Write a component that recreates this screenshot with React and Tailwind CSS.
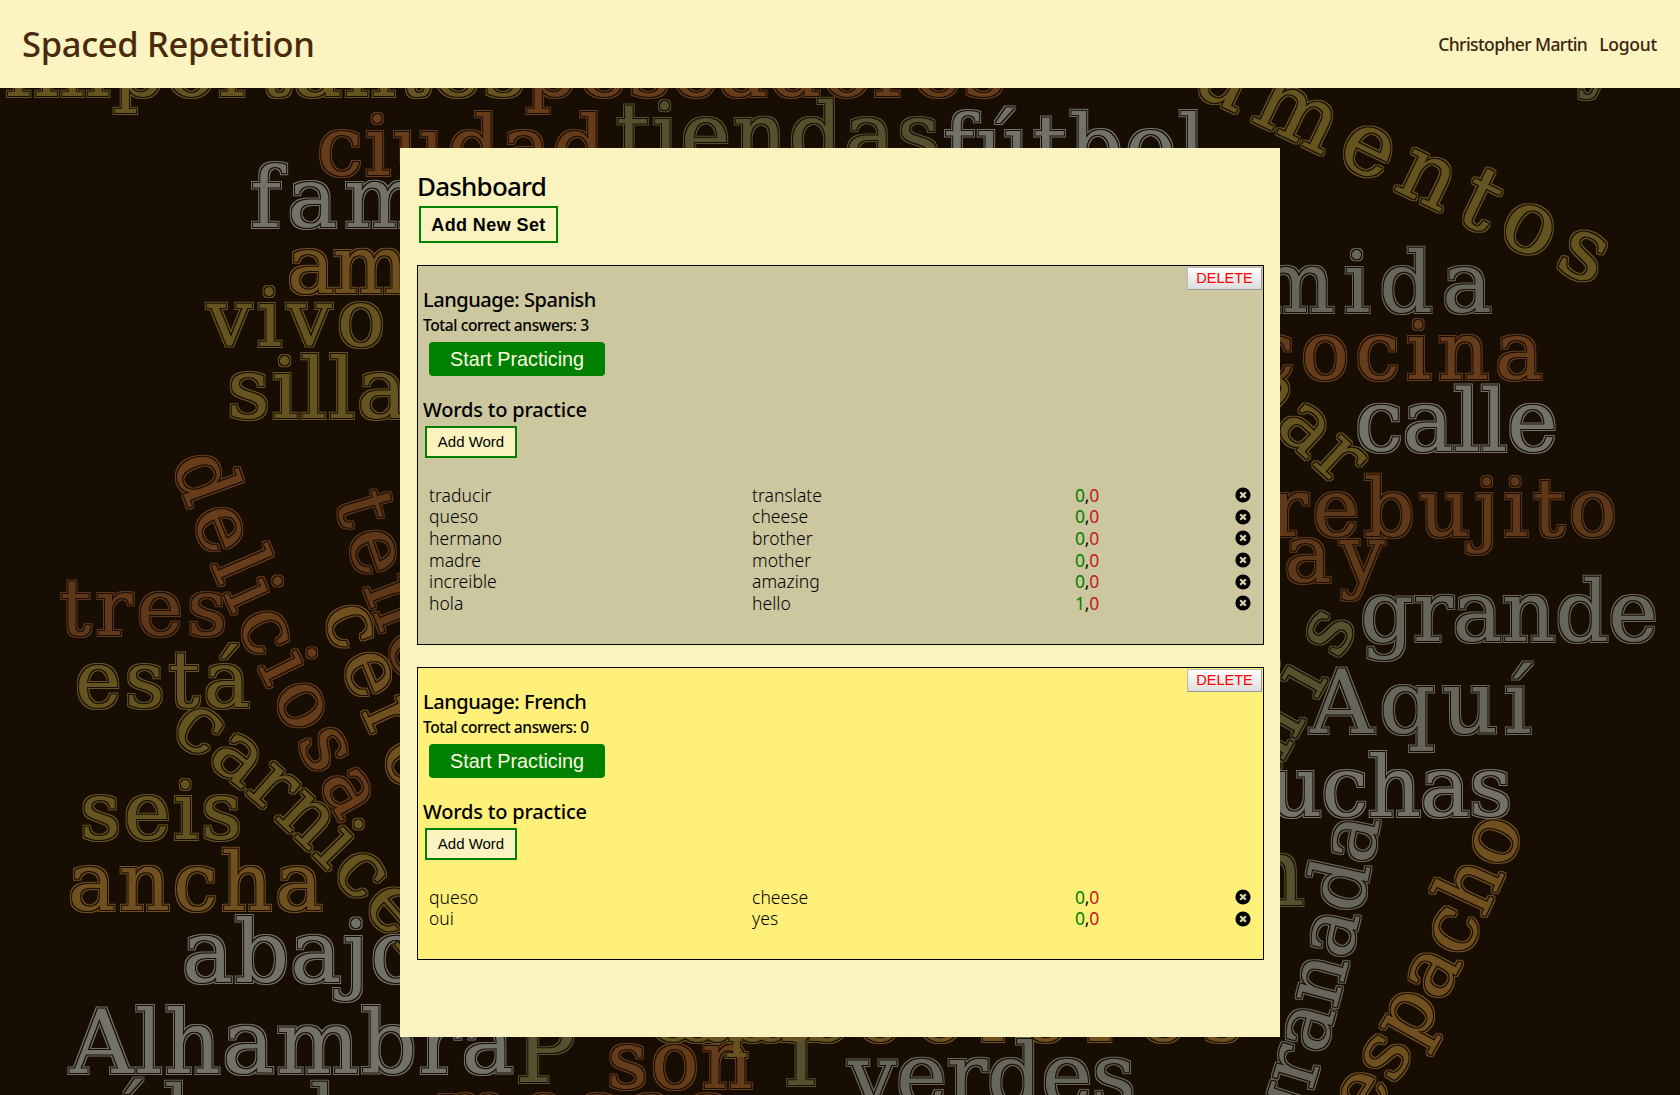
const GRAY = "#72726a";
const GRAY2 = "#66665a";
const BROWN = "#663c1a";
const BROWN2 = "#5f3819";
const OLIVE = "#655420";
const GOLD = "#71501f";
const KHAKI = "#55512f";

const straight = [
  ["importantes", 5, 96, 82, 520, OLIVE],
  ["pescadores", 525, 96, 82, 480, BROWN],
  ["ciudad", 317, 175, 82, 288, BROWN],
  ["tiendas", 616, 163, 84, 324, KHAKI],
  ["fútbol", 943, 175, 84, 262, GRAY],
  ["familia", 250, 227, 84, 330, GRAY],
  ["amigo", 287, 293, 80, 240, GOLD],
  ["vivo", 207, 346, 80, 178, OLIVE],
  ["silla", 227, 418, 84, 180, OLIVE],
  ["tres", 60, 635, 78, 167, BROWN2],
  ["está", 75, 707, 78, 175, OLIVE],
  ["seis", 80, 839, 80, 162, OLIVE],
  ["ancha", 68, 910, 80, 255, GOLD],
  ["abajo", 182, 982, 86, 240, GRAY],
  ["Alhambra", 70, 1073, 88, 444, GRAY],
  ["sábado", 55, 1146, 84, 340, GRAY2],
  ["mesas", 437, 1135, 76, 290, BROWN],
  ["P", 515, 1082, 90, 62, KHAKI],
  ["son", 607, 1088, 80, 146, BROWN],
  ["T", 771, 1085, 90, 54, KHAKI],
  ["verdes", 848, 1105, 86, 288, GRAY2],
  ["ocupado", 650, 1041, 76, 200, OLIVE],
  ["colores", 857, 1041, 76, 385, GOLD],
  ["hoy", 1480, 82, 76, 140, KHAKI],
  ["comida", 1140, 312, 84, 352, GRAY2],
  ["cocina", 1250, 379, 80, 293, BROWN],
  ["calle", 1355, 451, 86, 203, GRAY],
  ["rebujito", 1270, 536, 80, 347, BROWN2],
  ["hay", 1225, 582, 80, 160, BROWN2],
  ["grande", 1360, 641, 84, 298, GRAY2],
  ["Aquí", 1310, 733, 88, 222, GRAY2],
  ["muchas", 1190, 816, 84, 322, GRAY],
  ["tan", 1175, 905, 94, 130, KHAKI],
];

const curved = [
  ["a", "M 172 462 Q 225 620 345 830", "deliciosa", 80, 400, BROWN],
  ["b", "M 335 500 Q 360 590 410 700", "tener", 80, 240, BROWN2],
  ["c", "M 322 612 Q 360 720 420 830", "cerca", 80, 250, GOLD],
  ["d", "M 168 735 Q 285 810 420 975 L 540 1100", "carnicería", 80, 420, OLIVE],
  ["e", "M 1130 62 L 1595 287", "aumentos", 88, 515, OLIVE],
  ["f", "M 1215 375 L 1340 490", "mar", 80, 168, OLIVE],
  ["g", "M 1270 785 L 1358 625", "mis", 80, 183, KHAKI],
  ["h", "M 1296 1140 Q 1350 980 1380 820", "granada", 80, 332, GRAY2],
  ["i", "M 1340 1170 Q 1460 990 1527 820", "despacho", 80, 390, GOLD],
];

function WordCloud() {
  return (
    <svg className="absolute inset-0" width="1680" height="1095" aria-hidden="true">
      <defs>
        <filter id="outline" filterUnits="userSpaceOnUse" x="0" y="0" width="1680" height="1095" colorInterpolationFilters="sRGB">
          <feMorphology in="SourceGraphic" operator="dilate" radius="2" result="outer" />
          <feMorphology in="SourceAlpha" operator="dilate" radius="1" result="innerA" />
          <feFlood floodColor="#170d02" />
          <feComposite in2="innerA" operator="in" result="gap" />
          <feMerge result="m">
            <feMergeNode in="outer" />
            <feMergeNode in="gap" />
            <feMergeNode in="SourceGraphic" />
          </feMerge>
          <feGaussianBlur in="m" stdDeviation="0.45" />
        </filter>
        {curved.map((c) => (
          <path key={c[0]} id={`p-${c[0]}`} d={c[1]} />
        ))}
      </defs>
      <g filter="url(#outline)" fontFamily="'DejaVu Serif', serif">
        {straight.map(([t, x, y, s, l, c]) => (
          <text key={t} x={x} y={y} fontSize={s} textLength={l} fill={c}>{t}</text>
        ))}
        {curved.map(([id, , t, s, l, c]) => (
          <text key={id} fontSize={s} fill={c}>
            <textPath href={`#p-${id}`} textLength={l}>{t}</textPath>
          </text>
        ))}
      </g>
    </svg>
  );
}

function XIcon() {
  return (
    <svg width="16" height="16" viewBox="0 0 16 16">
      <circle cx="8" cy="8" r="7.6" fill="#000" />
      <path d="M5.2 5.2 L10.8 10.8 M10.8 5.2 L5.2 10.8" stroke="#d8d4b0" strokeWidth="2.2" />
    </svg>
  );
}

const ubuntu = "font-['Noto_Sans','Open_Sans',sans-serif]";
const arial = "font-['Liberation_Sans',Arial,sans-serif]";

function Row({ a, b, s }) {
  return (
    <div className="flex h-[21.7px] items-center">
      <div className="w-[323px] text-[17.5px] font-light tracking-[0.05px] text-black">{a}</div>
      <div className="w-[323px] text-[17.5px] font-light tracking-[0.05px] text-black">{b}</div>
      <div className="w-[160px] text-[17.5px] tracking-[-0.2px]">
        <span className="text-[#008000]">{s}</span>,<span className="text-[#c02020]">0</span>
      </div>
      <XIcon />
    </div>
  );
}

function WordSet({ bg, lang, total, rows, height }) {
  return (
    <section className={`relative border border-black px-[5px] pt-[18px] ${bg} ${height}`}>
      <button className={`absolute right-[1px] top-[0.5px] h-[23px] w-[75px] border border-[#bbb] border-b-[#999] border-r-[#999] bg-gradient-to-b from-white to-[#dcdcdc] text-center text-[14.5px] leading-[20px] text-[#ff0000] ${arial}`}>
        DELETE
      </button>
      <h2 className="h-[31px] text-[20px] font-medium leading-[32px] tracking-[-0.45px] text-black">Language: {lang}</h2>
      <p className="h-[20px] text-[15.5px] font-medium leading-[20px] tracking-[-0.4px] text-black">Total correct answers: {total}</p>
      <button className={`ml-[6px] mt-[7px] block h-[34px] w-[176px] rounded-[4px] bg-[#008000] text-center text-[19.8px] leading-[31px] text-[#fdfbe0] ${arial}`}>
        Start Practicing
      </button>
      <h2 className="mt-[18px] h-[31px] text-[20px] font-medium leading-[32px] tracking-[-0.2px] text-black">Words to practice</h2>
      <button className={`ml-[2px] mt-[1px] block h-[32px] w-[92px] border-2 border-[#008000] bg-[#faf3c0] text-center text-[15px] leading-[28px] text-black ${arial}`}>
        Add Word
      </button>
      <div className="mt-[26px] pl-[6px]">
        {rows.map((r) => (
          <Row key={r[0]} a={r[0]} b={r[1]} s={r[2]} />
        ))}
      </div>
    </section>
  );
}

export default function App() {
  return (
    <div className={`relative h-[1095px] w-[1680px] overflow-hidden bg-[#170d02] ${ubuntu}`}>
      <WordCloud />
      <header className="relative flex h-[88px] items-center justify-between bg-[#fbf4c0] pl-[22px] pr-[23px]">
        <h1 className="text-[34.5px] font-medium tracking-[-0.3px] text-[#4a2a0c]">Spaced Repetition</h1>
        <nav className="flex gap-[12px] text-[17.5px] font-medium text-[#3a2510]">
          <span className="tracking-[-0.6px]">Christopher Martin</span>
          <span className="tracking-[-0.25px]">Logout</span>
        </nav>
      </header>
      <main className="relative mx-auto mt-[60px] h-[889px] w-[880px] bg-[#faf3c0] pl-[17px] pr-[16px] pt-[19px]">
        <h1 className="h-[39px] text-[26px] font-medium leading-[38px] tracking-[-0.8px] text-black">Dashboard</h1>
        <button className={`ml-[2px] block h-[37px] w-[139px] border-2 border-[#008000] text-center text-[18px] font-bold leading-[34px] tracking-[0.4px] text-black ${arial}`}>
          Add New Set
        </button>
        <div className="mt-[22px] flex flex-col gap-[22px]">
          <WordSet
            bg="bg-[#ccc79f]"
            lang="Spanish"
            total="3"
            height="h-[380px]"
            rows={[
              ["traducir", "translate", "0"],
              ["queso", "cheese", "0"],
              ["hermano", "brother", "0"],
              ["madre", "mother", "0"],
              ["increible", "amazing", "0"],
              ["hola", "hello", "1"],
            ]}
          />
          <WordSet
            bg="bg-[#fff07a]"
            lang="French"
            total="0"
            height="h-[293px]"
            rows={[
              ["queso", "cheese", "0"],
              ["oui", "yes", "0"],
            ]}
          />
        </div>
      </main>
    </div>
  );
}
